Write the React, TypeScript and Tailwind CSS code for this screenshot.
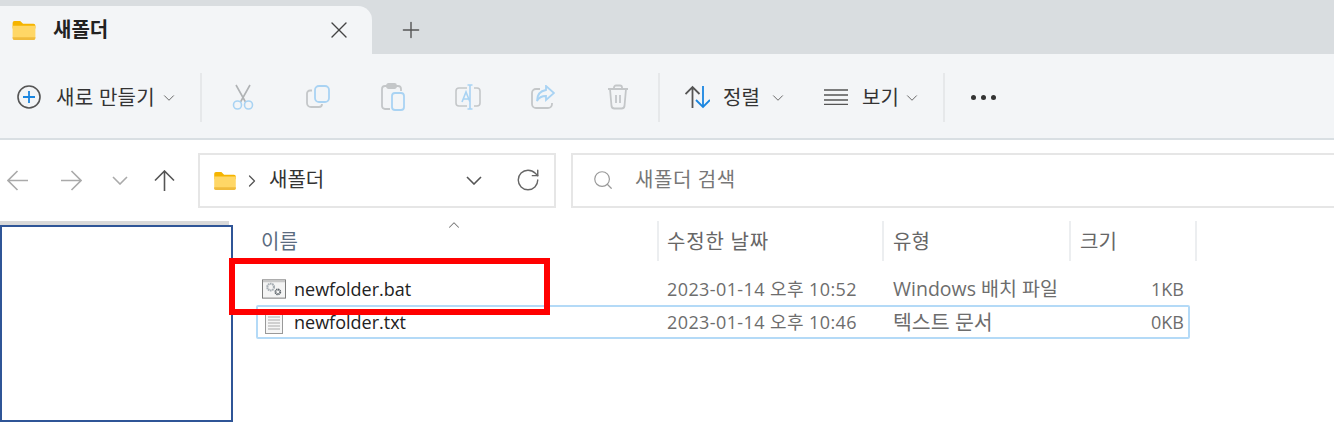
import React from 'react';
import { ChevronDown, X, Plus, RotateCw, Search, ChevronRight, ChevronUp } from 'lucide-react';

const FONT = '"Open Sans", "Noto Sans CJK KR", sans-serif';

const FolderIcon = ({ className }: { className?: string }) => (
  <svg viewBox="0 0 24 20" className={className}>
    <path d="M0 2a2 2 0 0 1 2-2h6l3 3h11a2 2 0 0 1 2 2v3H0z" fill="#f5b400" />
    <path d="M0 5h24v13a2 2 0 0 1-2 2H2a2 2 0 0 1-2-2z" fill="#ffd766" />
    <path d="M0 17h24v1a2 2 0 0 1-2 2H2a2 2 0 0 1-2-2z" fill="#f0bb3c" />
  </svg>
);

const Divider = () => <div className="w-[2px] h-[49px] bg-[#e6e8ea]" />;

const Caret = ({ className }: { className?: string }) => (
  <ChevronDown className={`w-[18px] h-[18px] text-[#666] ${className ?? ''}`} strokeWidth={1.3} />
);

const GRAY = '#c4c7c9';
const BLUE = '#a9d3f3';

const CutIcon = () => (
  <svg viewBox="0 0 24 26" className="w-[24px] h-[26px]" fill="none" strokeWidth="1.6">
    <path d="M5 1l9.5 17M19 1L9.5 18" stroke="#b0b3b5" />
    <circle cx="6.5" cy="21" r="4" stroke={BLUE} />
    <circle cx="17.5" cy="21" r="4" stroke={BLUE} />
  </svg>
);
const CopyIcon = () => (
  <svg viewBox="0 0 24 24" className="w-[24px] h-[24px]" fill="none" strokeWidth="1.8">
    <path d="M6 5.5H4a3 3 0 0 0-3 3V18a4 4 0 0 0 4 4h8a3 3 0 0 0 3-3" stroke={GRAY} />
    <rect x="9" y="1" width="14" height="16" rx="4" stroke={BLUE} />
  </svg>
);
const PasteIcon = () => (
  <svg viewBox="0 0 24 28" className="w-[24px] h-[28px]" fill="none" strokeWidth="1.8">
    <path d="M9 26H4a3 3 0 0 1-3-3V6a3 3 0 0 1 3-3h13a3 3 0 0 1 3 3v2" stroke={GRAY} />
    <rect x="6" y="1" width="9" height="4" rx="1.5" stroke={GRAY} />
    <rect x="11" y="10" width="12" height="17" rx="3" stroke={BLUE} />
  </svg>
);
const RenameIcon = () => (
  <svg viewBox="0 0 26 26" className="w-[26px] h-[26px]" fill="none" strokeWidth="1.6">
    <path d="M12 4H4a3 3 0 0 0-3 3v12a3 3 0 0 0 3 3h8M19 4h3a3 3 0 0 1 3 3v12a3 3 0 0 1-3 3h-3" stroke={GRAY} />
    <path d="M12.5 1h5M15 1v24M12.5 25h5M7 18l4-10 4 10M8.5 15h5" stroke={BLUE} />
  </svg>
);
const ShareIcon = () => (
  <svg viewBox="0 0 24 24" className="w-[24px] h-[24px]" fill="none" strokeWidth="1.8">
    <path d="M9 4H5a4 4 0 0 0-4 4v11a4 4 0 0 0 4 4h12a4 4 0 0 0 4-4v-1" stroke={GRAY} />
    <path d="M15 1l8 7-8 7v-4c-4 0-7 1-9 5 0-6 3-10 9-11z" stroke={BLUE} />
  </svg>
);
const TrashIcon = () => (
  <svg viewBox="0 0 22 26" className="w-[22px] h-[26px]" fill="none" stroke={GRAY} strokeWidth="1.8">
    <path d="M1 5h20M7 5V3.500a2 2 0 0 1 2-2h4a2 2 0 0 1 2 2V5M3 5l1.500 17a3 3 0 0 0 3 2.500h7a3 3 0 0 0 3-2.500L19 5M9 11v8M13 11v8" />
  </svg>
);

const SortIcon = () => (
  <svg viewBox="0 0 25 24" className="w-[25px] h-[24px]" fill="none" strokeWidth="1.8">
    <path d="M7.500 23V2M0.500 9l7-7 7 7" stroke="#555" />
    <path d="M18 1v21M11 15l7 7 7-7" stroke="#1a86e0" />
  </svg>
);

const ViewIcon = () => (
  <svg viewBox="0 0 24 16" className="w-[24px] h-[16px]" fill="none" stroke="#555" strokeWidth="1.500">
    <path d="M0 1h24M0 6h24M0 11h24M0 15.500h24" />
  </svg>
);

const BatIcon = () => (
  <svg viewBox="0 0 25 20" className="w-[25px] h-[20px]">
    <rect x="0.500" y="0.500" width="24" height="19" fill="#f4f4f4" stroke="#777" />
    <rect x="1" y="1" width="23" height="2" fill="#c8c8c8" />
    <circle cx="9" cy="8" r="3.500" fill="none" stroke="#a6adb3" strokeWidth="2.200" strokeDasharray="1.600 0.600" />
    <circle cx="16.500" cy="13" r="2.500" fill="none" stroke="#5f666c" strokeWidth="2" strokeDasharray="1.300 0.500" />
  </svg>
);

const TxtIcon = () => (
  <svg viewBox="0 0 18 24" className="w-[18px] h-[24px]">
    <rect x="0.500" y="0.500" width="17" height="23" fill="#f6f6f6" stroke="#999" />
    <path d="M3 4h12M3 7h12M3 10h12M3 13h12M3 16h12M3 19h12" stroke="#aaa" strokeWidth="1" />
  </svg>
);

// nav arrows, drawn pointing left and rotated
const NavArrow = ({ className }: { className?: string }) => (
  <svg viewBox="0 0 21 21" className={`w-[21px] h-[21px] ${className ?? ''}`} fill="none" stroke="currentColor" strokeWidth="1.6">
    <path d="M21 10.500H1M10.500 1L1 10.500 10.500 20" />
  </svg>
);

const SmallChevron = ({ className }: { className?: string }) => (
  <svg viewBox="0 0 16 9" className={`w-[16px] h-[9px] ${className ?? ''}`} fill="none" stroke="currentColor" strokeWidth="1.6">
    <path d="M1 1l7 7 7-7" />
  </svg>
);

const files = [
  { name: 'newfolder.bat', date: '2023-01-14 오후 10:52', type: 'Windows 배치 파일', typeSize: 'text-[19.500px]', size: '1KB', icon: <BatIcon />, selected: false },
  { name: 'newfolder.txt', date: '2023-01-14 오후 10:46', type: '텍스트 문서', typeSize: 'text-[20.500px]', size: '0KB', icon: <TxtIcon />, selected: true },
];

export default function App() {
  return (
    <div className="relative w-[1334px] h-[422px] overflow-hidden bg-white" style={{ fontFamily: FONT }}>
      {/* tab strip */}
      <div className="h-[54px] bg-[#d9dde0] pt-[6px] flex items-stretch">
        <div className="w-[372px] rounded-tr-[14px] bg-[#f3f5f7] flex items-center pl-[12px] pr-[19px]">
          <FolderIcon className="w-[24px] h-[19px]" />
          <span className="ml-[17px] text-[20px] font-semibold text-[#222]">새폴더</span>
          <X className="ml-auto w-[28px] h-[28px] text-[#444]" strokeWidth={1.2} />
        </div>
        <div className="ml-[26px] flex items-center">
          <Plus className="w-[26px] h-[26px] text-[#555]" strokeWidth={1.3} />
        </div>
      </div>

      {/* toolbar */}
      <div className="h-[86px] bg-[#f3f5f7] border-b-2 border-[#d9dfe3] flex items-center pl-[17px] pt-[2px]">
        <svg viewBox="0 0 24 24" className="w-[24px] h-[24px]" fill="none">
          <circle cx="12" cy="12" r="11" stroke="#555" strokeWidth="1.600" />
          <path d="M12 6v12M6 12h12" stroke="#1a86e0" strokeWidth="1.800" />
        </svg>
        <span className="ml-[15px] mt-[2px] w-[98px] text-[20px] text-[#333] tracking-[0.3px] whitespace-nowrap">새로 만들기</span>
        <Caret className="ml-[6px] mt-[2px]" />
        <div className="ml-[22px]"><Divider /></div>
        <div className="flex items-center ml-[3px]">
          {[<CutIcon />, <CopyIcon />, <PasteIcon />, <RenameIcon />, <ShareIcon />, <TrashIcon />].map((icon, i) => (
            <div key={i} className="w-[75px] flex justify-center">{icon}</div>
          ))}
        </div>
        <div className="ml-[3px]"><Divider /></div>
        <div className="ml-[25px]"><SortIcon /></div>
        <span className="ml-[13px] mt-[2px] w-[37px] text-[20px] text-[#333] whitespace-nowrap">정렬</span>
        <Caret className="ml-[9px] mt-[2px]" />
        <div className="ml-[37px]"><ViewIcon /></div>
        <span className="ml-[14px] mt-[2px] w-[36px] text-[20px] text-[#333] whitespace-nowrap">보기</span>
        <Caret className="ml-[5px] mt-[2px]" />
        <div className="ml-[22px]"><Divider /></div>
        <div className="ml-[26px] flex gap-[5px]">
          <span className="w-[5px] h-[5px] rounded-full bg-[#333]" />
          <span className="w-[5px] h-[5px] rounded-full bg-[#333]" />
          <span className="w-[5px] h-[5px] rounded-full bg-[#333]" />
        </div>
      </div>

      {/* address row */}
      <div className="h-[81px] flex items-center pl-[7px]">
        <NavArrow className="text-[#aaa]" />
        <NavArrow className="ml-[33px] rotate-180 text-[#aaa]" />
        <SmallChevron className="ml-[30px] text-[#aaa]" />
        <NavArrow className="ml-[26px] rotate-90 text-[#555]" />
        <div className="ml-[23px] w-[358px] h-[55px] border-2 border-[#e6e6e6] flex items-center pl-[14px] pr-[13px]">
          <FolderIcon className="w-[22px] h-[18px]" />
          <ChevronRight className="ml-[6px] w-[20px] h-[20px] text-[#555]" strokeWidth={1.5} />
          <span className="ml-[7px] text-[20px] text-[#333] whitespace-nowrap -mt-[1px]">새폴더</span>
          <SmallChevron className="ml-auto mr-[2px] text-[#555]" />
          <RotateCw className="ml-[31px] w-[26px] h-[26px] text-[#666] -mt-[2px]" strokeWidth={1.3} />
        </div>
        <div className="ml-[15px] flex-1 h-[55px] border-2 border-r-0 border-[#e6e6e6] flex items-center pl-[19px]">
          <Search className="w-[22px] h-[22px] text-[#999] -mt-[2px]" strokeWidth={1.3} />
          <span className="ml-[21px] -mt-[1px] text-[20px] tracking-[0.6px] text-[#777] whitespace-nowrap">새폴더 검색</span>
        </div>
      </div>

      {/* sidebar + file list */}
      <div className="flex">
        <div className="w-[233px] shrink-0">
          <div className="h-[4px] w-[229px] bg-[#d9d9d9]" />
        </div>
        <div className="flex-1 relative">
          <ChevronUp className="absolute left-[212px] -top-[5px] w-[18px] h-[18px] text-[#777]" strokeWidth={1.4} />
          <div className="h-[40px] flex items-center text-[20px] text-[#666]">
            <div className="w-[426px] h-full flex items-center pl-[28px] pt-[2px] border-r-2 border-[#eceef0] text-[#5b6b80]">이름</div>
            <div className="w-[225px] h-full flex items-center pl-[8px] pt-[2px] border-r-2 border-[#eceef0] tracking-[0.8px] whitespace-nowrap">수정한 날짜</div>
            <div className="w-[187px] h-full flex items-center pl-[9px] pt-[2px] border-r-2 border-[#eceef0]">유형</div>
            <div className="w-[126px] h-full flex items-center pl-[9px] pt-[2px] border-r-2 border-[#eceef0]">크기</div>
          </div>
          <div className="mt-[11px] ml-[24px] w-[933px]">
            {files.map(f => (
              <div
                key={f.name}
                className={`h-[34px] flex items-center text-[18px] text-[#6d6d6d] ${f.selected ? 'border-2 border-[#b4daf7] rounded-[2px] -mt-[1px] -ml-[1px] w-[934px] pl-[1px]' : 'border-2 border-transparent'}`}
              >
                <div className="w-[24px] ml-[3px] flex justify-center">{f.icon}</div>
                <span className="ml-[8px] w-[373px] text-[#222]">{f.name}</span>
                <span className="w-[226px] tracking-[0.4px] whitespace-nowrap">{f.date}</span>
                <span className={`w-[200px] whitespace-nowrap ${f.typeSize}`}>{f.type}</span>
                <span className="w-[91px] text-right">{f.size}</span>
              </div>
            ))}
          </div>
        </div>
      </div>

      {/* annotation marks drawn over the screenshot */}
      <div className="absolute left-0 top-[225px] w-[233px] h-[197px] bg-white border-2 border-[#2f5597]" />
      <div className="absolute left-[229px] top-[258px] w-[321px] h-[57px] border-[6px] border-[#ff0000]" />
    </div>
  );
}
